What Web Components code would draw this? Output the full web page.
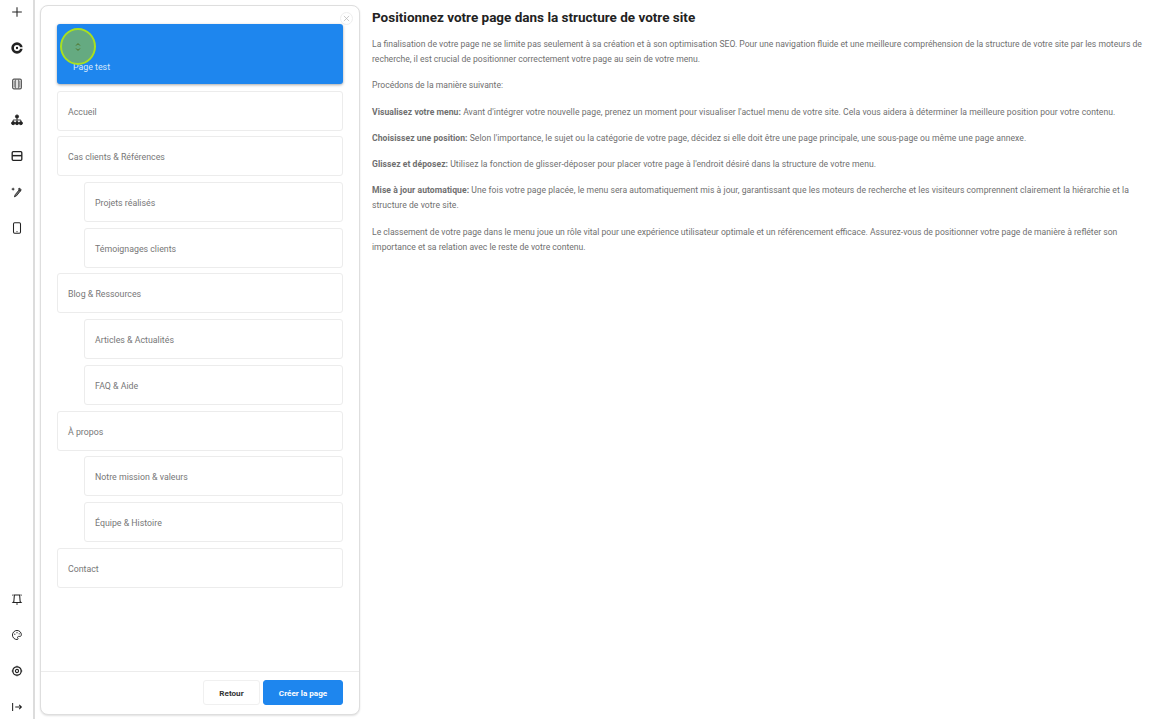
<!DOCTYPE html>
<html lang="fr">

<head>
    <meta charset="UTF-8" />
    <title>Positionnez votre page</title>
    <style>
        * {
            box-sizing: border-box;
        }

        html,
        body {
            height: 100%;
        }

        body {
            margin: 0;
            display: flex;
            overflow: hidden;
            background: #fff;
            font-family: Roboto, "Liberation Sans", sans-serif;
        }

        /* les paragraphes avec un titre en gras sont un peu plus larges */
        help-text p:has(b) {
            letter-spacing: .05px;
        }
    </style>
</head>

<body>
    <side-rail></side-rail>
    <place-panel>
        <menu-row state="drag">Page test</menu-row>
        <menu-row>Accueil</menu-row>
        <menu-row>Cas clients &amp; Références</menu-row>
        <menu-row sub>Projets réalisés</menu-row>
        <menu-row sub>Témoignages clients</menu-row>
        <menu-row>Blog &amp; Ressources</menu-row>
        <menu-row sub>Articles &amp; Actualités</menu-row>
        <menu-row sub>FAQ &amp; Aide</menu-row>
        <menu-row>À propos</menu-row>
        <menu-row sub>Notre mission &amp; valeurs</menu-row>
        <menu-row sub>Équipe &amp; Histoire</menu-row>
        <menu-row>Contact</menu-row>
    </place-panel>
    <help-text>
        <h1 slot="title">Positionnez votre page dans la structure de votre site</h1>
        <p>La finalisation de votre page ne se limite pas seulement à sa création et à son optimisation SEO. Pour une navigation fluide et une meilleure compréhension de la structure de votre site par les moteurs de recherche, il est crucial de positionner correctement votre page au sein de votre menu.</p>
        <p>Procédons de la manière suivante:</p>
        <p><b>Visualisez votre menu:</b> Avant d'intégrer votre nouvelle page, prenez un moment pour visualiser l'actuel menu de votre site. Cela vous aidera à déterminer la meilleure position pour votre contenu.</p>
        <p><b>Choisissez une position:</b> Selon l'importance, le sujet ou la catégorie de votre page, décidez si elle doit être une page principale, une sous-page ou même une page annexe.</p>
        <p><b>Glissez et déposez:</b> Utilisez la fonction de glisser-déposer pour placer votre page à l'endroit désiré dans la structure de votre menu.</p>
        <p><b>Mise à jour automatique:</b> Une fois votre page placée, le menu sera automatiquement mis à jour, garantissant que les moteurs de recherche et les visiteurs comprennent clairement la hiérarchie et la structure de votre site.</p>
        <p>Le classement de votre page dans le menu joue un rôle vital pour une expérience utilisateur optimale et un référencement efficace. Assurez-vous de positionner votre page de manière à refléter son importance et sa relation avec le reste de votre contenu.</p>
    </help-text>

    <script>
        // icones de la barre laterale, en haut puis en bas
        const ICONS_TOP = [
            '<path d="M8 2.5v11M2.5 8h11" stroke-width="1.2"/>',
            '<circle cx="8" cy="8" r="5" stroke-width="3"/><path d="M11 8h4.500" stroke="#fff" stroke-width="1.800"/><circle cx="8" cy="8" r="1.300" fill="#111" stroke="none"/>',
            '<rect x="3" y="2.5" width="10" height="11" rx="1.5" stroke-width="1.3" stroke="#555"/><path d="M6.5 3v10M9.5 3v10" stroke-width="1.1" stroke="#555"/><path d="M4 4h2v8H4zM10 4h2v8h-2z" fill="#999" stroke="none"/>',
            '<circle cx="8" cy="4" r="1.8" fill="#222"/><circle cx="3.6" cy="11.6" r="1.8" fill="#222"/><circle cx="8" cy="11.6" r="1.8" fill="#222"/><circle cx="12.4" cy="11.6" r="1.8" fill="#222"/><path d="M8 5v5M3.6 10V8h8.8v2" stroke-width="1"/>',
            '<rect x="2.5" y="3" width="11" height="10" rx="1.2" stroke-width="1.5"/><path d="M2.5 7.6h11" stroke-width="1.7"/>',
            '<path d="M5 13.500l1-2.500 4.500-5.500 1.500 1.200-4.500 5.600zM10.500 3.500l2.300 1.800-.8 1.400-2.300-1.800z" stroke-width="1" fill="#777"/><path d="M3.500 2.500l.6 1.600 1.600.6-1.600.6-.6 1.600-.6-1.600-1.600-.6 1.600-.6z" fill="#222" stroke="none"/>',
            '<rect x="4" y="2" width="8" height="12" rx="1.300" stroke-width="1.200"/><path d="M7.300 12.200h1.400" stroke-width="1"/>'
        ];
        const ICONS_BOTTOM = [
            '<path d="M5 3.500h6l.6 7.500 1 1H3.400l1-1z" stroke-width="1.200"/><path d="M7 13.700h2M3.800 3l-1 1M12.200 3l1 1" stroke-width="1.200"/>',
            '<path d="M8 2.800a5.200 5.200 0 1 0 0 10.400c1.400 0 1.300-1.200.8-1.900-.5-.8 0-1.700 1-1.700h1.500c1.100 0 1.700-.8 1.700-1.800 0-2.800-2.300-5-5-5z" stroke-width="1.100"/><circle cx="5.500" cy="7" r=".7" fill="#222" stroke="none"/><circle cx="8" cy="5.300" r=".7" fill="#222" stroke="none"/><circle cx="10.500" cy="6.600" r=".7" fill="#222" stroke="none"/>',
            '<circle cx="8" cy="8" r="4.800" stroke-width="1.500"/><circle cx="8" cy="8" r="1.800" stroke-width="1.300"/><path d="M8 2v1.200M8 12.800V14M2 8h1.200M12.800 8H14" stroke-width="1.200"/>',
            '<path d="M3 3.500v9M6 8h7M10.500 5.500L13 8l-2.500 2.500" stroke-width="1.200"/>'
        ];

        function iconSvg(body) {
            return `<svg viewBox="0 0 16 16" width="14" height="14" fill="none" stroke="#222">${body}</svg>`;
        }

        // barre laterale gauche
        class SideRail extends HTMLElement {
            connectedCallback() {
                const root = this.attachShadow({ mode: 'open' });
                const cell = (icon) => `<span>${iconSvg(icon)}</span>`;
                root.innerHTML = `
                    <style>
                        :host {
                            display: flex;
                            flex-direction: column;
                            justify-content: space-between;
                            flex: none;
                            width: 35px;
                            height: 100%;
                            border-right: 2px solid #dcdcdc;
                        }
                        div { display: flex; flex-direction: column; }
                        span {
                            display: flex;
                            align-items: center;
                            justify-content: center;
                            height: 36px;
                        }
                    </style>
                    <div style="margin-top:-6px">${ICONS_TOP.map(cell).join('')}</div>
                    <div style="margin-bottom:-6px">${ICONS_BOTTOM.map(cell).join('')}</div>`;
            }
        }

        // une ligne du menu, "sub" pour une sous-page, state="drag" pour la page qu'on deplace
        class MenuRow extends HTMLElement {
            connectedCallback() {
                const root = this.attachShadow({ mode: 'open' });
                root.innerHTML = `
                    <style>
                        :host {
                            display: flex;
                            align-items: center;
                            height: 40px;
                            padding: 2px 0 0 10px;
                            border: 1px solid #ececec;
                            border-radius: 3px;
                            background: #fff;
                            color: #777;
                            font-size: 8.8px;
                            flex: none;
                        }
                        :host([sub]) {
                            margin-left: 27px;
                        }
                        :host([state="drag"]) {
                            position: relative;
                            align-items: flex-end;
                            height: 60px;
                            margin-bottom: 1px;
                            padding: 0 0 12px 16px;
                            border: 0;
                            background: #1e86ee;
                            color: #d6e8fb;
                            box-shadow: 0 1px 3px rgba(0, 0, 0, .35);
                        }
                        i {
                            position: absolute;
                            box-sizing: border-box;
                            left: 3px;
                            top: 4px;
                            width: 36px;
                            height: 37px;
                            border: 2.500px solid #a9e01f;
                            border-radius: 50%;
                            background: rgba(160, 200, 40, .55);
                            display: flex;
                            align-items: center;
                            justify-content: center;
                        }
                    </style>
                    ${this.getAttribute('state') === 'drag'
                        ? '<i><svg viewBox="0 0 8 12" width="6" height="10" fill="none" stroke="#4d6b1c" stroke-width="1.300"><path d="M1.500 4L4 1.500 6.500 4M1.500 8L4 10.500 6.500 8"/></svg></i>'
                        : ''}
                    <slot></slot>`;
            }
        }

        // panneau avec la liste du menu et les boutons
        class PlacePanel extends HTMLElement {
            connectedCallback() {
                const root = this.attachShadow({ mode: 'open' });
                root.innerHTML = `
                    <style>
                        * { box-sizing: border-box; }
                        :host {
                            position: relative;
                            display: flex;
                            flex-direction: column;
                            flex: none;
                            width: 320px;
                            height: 710px;
                            margin: 5px 0 0 5px;
                            border: 1px solid #dedede;
                            border-radius: 8px;
                            background: #fff;
                            box-shadow: 0 1px 2px rgba(0, 0, 0, .12);
                        }
                        .list {
                            flex: 1;
                            display: flex;
                            flex-direction: column;
                            gap: 5.700px;
                            padding: 18px 16px 0;
                        }
                        .foot {
                            flex: none;
                            display: flex;
                            justify-content: flex-end;
                            gap: 3px;
                            height: 43px;
                            padding: 8px 16px 0;
                            border-top: 1px solid #ececec;
                        }
                        button {
                            height: 25px;
                            padding: 0;
                            border: 1px solid #f0f0f0;
                            border-radius: 3px;
                            background: #fff;
                            color: #333;
                            font: 700 8.100px Roboto, "Liberation Sans", sans-serif;
                        }
                        .back { width: 57px; }
                        .go {
                            width: 80px;
                            border-color: #1e86ee;
                            background: #1e86ee;
                            color: #fff;
                        }
                        .close {
                            position: absolute;
                            right: 6px;
                            top: 6px;
                            width: 13px;
                            height: 13px;
                            border: 1px solid #eee;
                            border-radius: 50%;
                            display: flex;
                            align-items: center;
                            justify-content: center;
                            background: #fff;
                        }
                    </style>
                    <span class="close"><svg viewBox="0 0 8 8" width="7" height="7" fill="none" stroke="#b5b5b5" stroke-width=".8"><path d="M1 1l6 6M7 1L1 7"/></svg></span>
                    <div class="list"><slot></slot></div>
                    <div class="foot">
                        <button class="back">Retour</button>
                        <button class="go">Créer la page</button>
                    </div>`;
            }
        }

        // colonne de texte a droite
        class HelpText extends HTMLElement {
            connectedCallback() {
                const root = this.attachShadow({ mode: 'open' });
                root.innerHTML = `
                    <style>
                        :host {
                            display: block;
                            flex: 1;
                            min-width: 0;
                            padding: 8px 4px 0 12px;
                            color: #6f6f6f;
                            font-size: 8.600px;
                            line-height: 15px;
                        }
                        ::slotted(h1) {
                            margin: 0 0 11px;
                            color: #222;
                            font-size: 13.500px;
                            line-height: 18px;
                            font-weight: 700;
                        }
                        ::slotted(p) {
                            margin: 0 0 11.300px;
                        }
                    </style>
                    <slot name="title"></slot>
                    <slot></slot>`;
            }
        }

        customElements.define('side-rail', SideRail);
        customElements.define('menu-row', MenuRow);
        customElements.define('place-panel', PlacePanel);
        customElements.define('help-text', HelpText);
    </script>
</body>

</html>
